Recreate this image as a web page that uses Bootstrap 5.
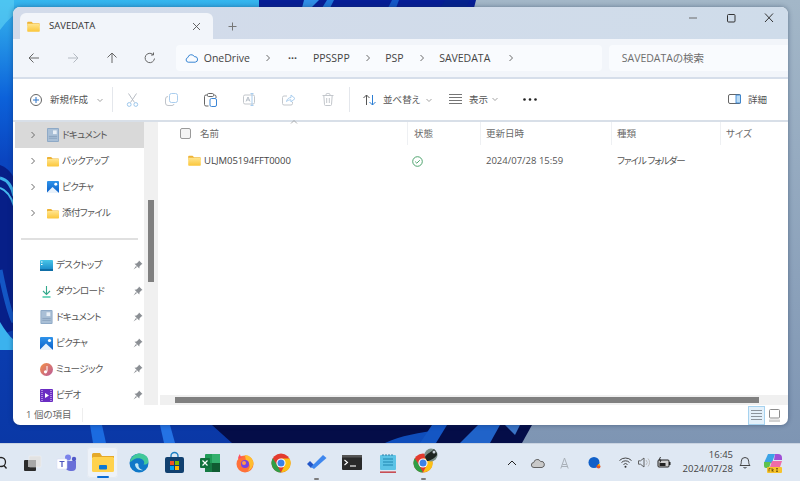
<!DOCTYPE html>
<html lang="ja">
<head>
<meta charset="UTF-8">
<title>SAVEDATA - エクスプローラー</title>
<link href="https://cdn.jsdelivr.net/npm/bootstrap@5.3.0/dist/css/bootstrap.min.css" rel="stylesheet">
<style>
html, body { height: 481px; overflow: hidden; }
body { font-family: "Open Sans", "Noto Sans CJK JP", sans-serif; font-size: 9.5px; color: #555; background: #8fa6bd; line-height: 1.2; font-feature-settings: "palt"; white-space: nowrap; }
svg { display: block; flex: none; overflow: visible; }
.desk { height: 443px; }
.wall { position: absolute; left: 0; top: 0; }
.win { position: absolute; left: 13px; top: 7px; width: 775px; height: 418px; background: #fff; border-radius: 7px; overflow: hidden; box-shadow: 0 0 5px rgba(20, 40, 70, .45); }

.tabstrip { height: 32px; background: linear-gradient(90deg, #d3dbea, #cfdcea); }
.ftab { width: 193px; height: 26px; margin-left: 7px; background: #f2f5fa; border-radius: 6px 6px 0 0; padding: 0 12px 0 7px; color: #333; }
.ftab-title { margin-left: 9px; }
.plus { margin-left: 15px; margin-top: 6px; }
.winbtns { gap: 26px; padding-right: 13px; margin-bottom: 16px; }

.addr { height: 40px; background: #f2f5fa; border-bottom: 2px solid #d6deea; }
.navbtn { width: 38.7px; }
.navbtns { padding-left: 2px; }
.crumbs { width: 426px; height: 26px; margin-left: 6px; background: #f9fbfe; border-radius: 4px; padding-left: 9px; font-size: 10.5px; color: #444; }
.crumbs .c-chev { margin-left: 14px; }
.crumbs span.c-drive { margin-left: 6px; }
.crumbs span.c-dots { margin-left: 16px; font-weight: 700; }
.crumbs span.c-name { margin-left: 13.5px; }
.crumbs span.c-first { margin-left: 16px; }
.crumbs .c-last { margin-left: 17px; }
.searchbox { width: 179px; height: 26px; margin-left: 7px; background: #f9fbfe; border-radius: 4px 0 0 4px; padding-left: 13px; font-size: 10.5px; color: #6d6d6d; }

.cmdbar { height: 43px; border-bottom: 2px solid #d8dfe8; padding-left: 17px; }
.newbtn { width: 82px; gap: 8px; }
.vsep { width: 1px; height: 25px; background: #e4e7ec; }
.vsep-b { margin-left: 2px; }
.toolbtn { width: 39px; }
.sortbtn { width: 82px; padding-left: 13px; gap: 7px; }
.sortbtn svg:last-child { margin-left: -2px; }
.viewbtn { width: 72px; gap: 7px; padding-left: 9px; margin-left: 8px; }
.viewbtn svg:last-child { margin-left: -4px; }
.dotsbtn { width: 22px; margin-left: 7px; }
.detailbtn { gap: 7px; padding-right: 21px; }

.pane { height: 283px; }
.navpane { width: 145px; }
.navlist { width: 131px; padding-left: 2px; }
.navrow { height: 26px; flex: none; color: #555; letter-spacing: -.6px; }
.navrow.cur { background: #d9d9d9; }
.exp { padding-left: 14px; gap: 10px; }
.pinrow { padding-left: 25px; gap: 3px; }
.exp .navname { margin-left: -7px; }
.pinicon { margin-left: auto; margin-right: 1px; }
.navdiv { height: 2px; margin: 12px 6px 12px 6px; background: #e0e0e0; flex: none; }
.vscroll { width: 14px; background: #f0f0f0; padding: 78px 4px 0 4px; }
.vthumb { height: 82px; background: #808080; }
.mainpane { min-width: 0; margin-left: 2px; }
.colhead { height: 24px; color: #6a6a6a; }
.caret-up { position: absolute; left: 130px; top: -2px; }
.col-name { width: 248px; padding-left: 20px; }
.col-state { width: 73px; padding-left: 6px; }
.col-date { width: 131px; padding-left: 5px; }
.col-kind { width: 109px; padding-left: 5px; }
.col-size { padding-left: 5px; }
.colhead > div { height: 23px; border-right: 1px solid #eef0f3; }
.colhead > .col-size { border-right: 0; }
.headcheck { width: 11px; height: 11px; border: 1px solid #9a9a9a; border-radius: 2px; background: #f4f4f4; margin-right: 9px; }
.filerow { height: 28px; margin-top: 1px; }
.filerow .col-name { padding-left: 28px; gap: 3px; color: #444; }
.filerow .col-state { padding-left: 4px; }
.filerow .col-kind { letter-spacing: -1px; }
.hscroll { height: 10px; background: #f0f0f0; padding: 2px 29px 1px 15px; }
.hthumb { height: 6px; background: #808080; }

.statusbar { height: 20px; padding-left: 13px; color: #666; }
.statusitem { padding-right: 10px; border-right: 1px solid #eee; height: 14px; }
.viewtoggle { padding-right: 8px; gap: 4px; }
.listtoggle { width: 17px; height: 19px; background: #e3f0fa; border: 1px solid #a6d2ef; }

.taskbar { height: 38px; background: #dfe8f3; border-top: 1px solid #c9d3e1; }
.tb-search { width: 14px; height: 36px; overflow: hidden; }
.tb-item { width: 35.6px; height: 36px; position: relative; }
.tb-item.on { background: #edf2f9; border-radius: 4px; box-shadow: inset 0 0 0 1px #e3e9f2; width: 31px; height: 31px; margin: 0 2.3px; }
.tb-dot { position: absolute; left: 50%; bottom: 1px; width: 5px; height: 2px; margin-left: -2.5px; background: #7c7c7c; border-radius: 1px; }
.tb-item.on .tb-dot { width: 12px; margin-left: -6px; background: #0a6cd4; bottom: 0; }
.overlay { position: absolute; left: 18px; top: 3px; }
.tray { color: #333; }
.tray-ico { width: 26px; }
.tray-w { width: 27px; }
.tray-n { width: 19px; }
.clock { width: 56px; text-align: right; font-size: 9.5px; line-height: 14px; color: #444; margin-left: 4px; margin-bottom: 2px; }
.bellbox { width: 24px; }
.copilot { width: 43px; padding-right: 17px; }
</style>
</head>
<body>
<svg width="0" height="0" class="position-absolute">
  <defs>
    <linearGradient id="gFold" x1="0" y1="0" x2="0" y2="1"><stop offset="0" stop-color="#ffe58f"/><stop offset="1" stop-color="#fbc63a"/></linearGradient>
    <linearGradient id="gPic" x1="0" y1="0" x2="0" y2="1"><stop offset="0" stop-color="#2f93ea"/><stop offset="1" stop-color="#0b5fc8"/></linearGradient>
    <linearGradient id="gDesk" x1="0" y1="0" x2="0" y2="1"><stop offset="0" stop-color="#49c6e8"/><stop offset="1" stop-color="#1a8ac9"/></linearGradient>
    <linearGradient id="gMusic" x1="0" y1="0" x2="1" y2="1"><stop offset="0" stop-color="#f59044"/><stop offset="1" stop-color="#b95a9c"/></linearGradient>
    <linearGradient id="gWallL" x1="0" y1="0" x2="0" y2="1"><stop offset="0" stop-color="#35b6ee"/><stop offset=".22" stop-color="#0c62da"/><stop offset=".36" stop-color="#0a45c0"/><stop offset="1" stop-color="#0a38a6"/></linearGradient>
    <linearGradient id="gWallR" x1="0" y1="0" x2="0" y2="1"><stop offset="0" stop-color="#a3b7c8"/><stop offset="1" stop-color="#7e95b3"/></linearGradient>
    <symbol id="folder" viewBox="0 0 16 14"><path d="M0 2a1 1 0 0 1 1-1h4.500l2 2H15a1 1 0 0 1 1 1v2H0z" fill="#eeb336"/><rect y="3.600" width="16" height="10" rx="1" fill="url(#gFold)"/></symbol>
    <symbol id="chev" viewBox="0 0 8 8"><path d="M2.500 1l3 3-3 3" fill="none" stroke="#6b6b6b" stroke-width="1"/></symbol>
    <symbol id="down" viewBox="0 0 8 8"><path d="M1.500 3l2.500 2.500L6.500 3" fill="none" stroke="#8a8a8a" stroke-width=".8"/></symbol>
    <symbol id="pin" viewBox="0 0 10 10"><path d="M6 .5L9.500 4 8.300 4.500 6.500 6.500 6.300 8.500 1.500 3.700 3.500 3.500 5.500 1.700zM3 6L.5 9.500 4 7z" fill="#8b8f94"/></symbol>
    <symbol id="docu" viewBox="0 0 13 15"><rect width="13" height="15" rx="1" fill="#8ea9c6"/><rect x="1" y="1" width="11" height="13" fill="#a9bfd6"/><rect x="6.500" y="2.500" width="4" height="4" fill="#e8eff6"/><path d="M2 9h9M2 11h9" stroke="#7f99b6" stroke-width=".8"/></symbol>
    <symbol id="pict" viewBox="0 0 13 13"><rect width="13" height="13" rx="1" fill="url(#gPic)"/><circle cx="9.500" cy="3.500" r="1.600" fill="#fff"/><path d="M0 12.500 6 6.500l6.500 6V13H0z" fill="#e9f2fb"/></symbol>
  </defs>
</svg>

<div class="desk position-relative">
  <svg class="wall" width="800" height="443" viewBox="0 0 800 443">
    <rect width="800" height="443" fill="url(#gWallR)"/>
    <rect width="259" height="443" fill="url(#gWallL)"/>
    <polygon points="259,0 476,0 474,8 259,8" fill="#071e96"/>
    <polygon points="304,0 319,0 311,8 302,8" fill="#2f8ee6"/>
    <polygon points="327,0 334,0 330,8 322,8" fill="#1e75d8"/>
    <polygon points="392,0 399,0 396,8 388,8" fill="#1458c8"/>
    <polygon points="445,0 470,0 466,8 440,8" fill="#06238f"/>
    <path d="M0 30C6 22 10 18 14 15V0H0z" fill="#58ccf2" opacity=".7"/>
    <path d="M0 165C8 168 13 174 14 180L14 330 0 335z" fill="#071f88"/>
    <path d="M0 178C8 180 12 186 14 196" fill="none" stroke="#3db0ec" stroke-width="3"/>
    <path d="M0 188C6 190 11 196 14 206" fill="none" stroke="#46b9f0" stroke-width="2"/>
    <path d="M0 270C4 290 8 310 14 322" fill="none" stroke="#1356c4" stroke-width="5"/>
    <path d="M0 322C5 330 9 336 14 340V350H0z" fill="#3bb2ee"/>
    <polygon points="90,425 102,425 106,443 93,443" fill="#1b6be0"/>
    <polygon points="160,425 170,425 175,443 164,443" fill="#2472e4"/>
    <polygon points="212,425 532,425 522,443 232,443" fill="#040d48"/>
    <path d="M385 443C400 436 420 432 440 430L430 443z" fill="#0f4dbb"/>
    <polygon points="432,425 447,425 436,443 420,443" fill="#1456c4"/>
    <polygon points="460,443 478,425 500,425 490,443" fill="#2063c9"/>
    <polygon points="505,425 520,425 515,435" fill="#3a74c6"/>
  </svg>

  <div class="win d-flex flex-column">
    <div class="tabstrip d-flex align-items-end">
      <div class="ftab d-flex align-items-center">
        <svg width="13" height="11"><use href="#folder"/></svg>
        <span class="ftab-title flex-grow-1">SAVEDATA</span>
        <svg width="9" height="9" viewBox="0 0 9 9"><path d="M1 1l7 7M8 1L1 8" stroke="#555" stroke-width=".9"/></svg>
      </div>
      <svg class="plus mb-2" width="9" height="9" viewBox="0 0 9 9"><path d="M4.500.5v8M.5 4.500h8" stroke="#777" stroke-width="1"/></svg>
      <div class="winbtns d-flex align-items-center ms-auto">
        <svg width="12" height="10" viewBox="0 0 12 10"><path d="M2 5h8" stroke="#6a6a6a" stroke-width="1"/></svg>
        <svg width="12" height="10" viewBox="0 0 12 10"><rect x="2.500" y="1.500" width="7.500" height="7.500" rx="1" fill="none" stroke="#333" stroke-width="1"/></svg>
        <svg width="12" height="10" viewBox="0 0 12 10"><path d="M2 .5l8 8.500M10 .5L2 9" stroke="#333" stroke-width="1"/></svg>
      </div>
    </div>

    <div class="addr d-flex align-items-center">
      <div class="navbtns d-flex">
        <div class="navbtn d-flex justify-content-center"><svg width="12" height="12" viewBox="0 0 12 12"><path d="M11 6H1M5.500 1.500L1 6l4.500 4.500" fill="none" stroke="#666" stroke-width="1"/></svg></div>
        <div class="navbtn d-flex justify-content-center"><svg width="12" height="12" viewBox="0 0 12 12"><path d="M1 6h10M6.500 1.500L11 6l-4.500 4.500" fill="none" stroke="#b4bac2" stroke-width="1"/></svg></div>
        <div class="navbtn d-flex justify-content-center"><svg width="12" height="12" viewBox="0 0 12 12"><path d="M6 11V1M1.500 5.500L6 1l4.500 4.500" fill="none" stroke="#666" stroke-width="1"/></svg></div>
        <div class="navbtn d-flex justify-content-center"><svg width="12" height="12" viewBox="0 0 12 12"><path d="M10.500 6.500A4.700 4.700 0 1 1 9 2.500M9.500 .5v2.500H7" fill="none" stroke="#666" stroke-width="1"/></svg></div>
      </div>
      <div class="crumbs d-flex align-items-center">
        <svg width="13" height="10" viewBox="0 0 13 10"><path d="M3.200 9.200a2.400 2.400 0 0 1-.3-4.700 3.400 3.400 0 0 1 6.400-.9 2.800 2.800 0 0 1 .9 5.600z" fill="none" stroke="#3a87d4" stroke-width="1"/></svg>
        <span class="c-drive">OneDrive</span>
        <svg class="c-chev" width="8" height="8"><use href="#chev"/></svg>
        <span class="c-dots">···</span>
        <span class="c-name c-first">PPSSPP</span>
        <svg class="c-chev" width="8" height="8"><use href="#chev"/></svg>
        <span class="c-name">PSP</span>
        <svg class="c-chev" width="8" height="8"><use href="#chev"/></svg>
        <span class="c-name">SAVEDATA</span>
        <svg class="c-chev c-last" width="8" height="8"><use href="#chev"/></svg>
      </div>
      <div class="searchbox d-flex align-items-center">SAVEDATAの検索</div>
    </div>

    <div class="cmdbar d-flex align-items-center">
      <div class="newbtn d-flex align-items-center">
        <svg width="12" height="12" viewBox="0 0 12 12"><circle cx="6" cy="6" r="5.500" fill="none" stroke="#555" stroke-width=".9"/><path d="M6 3v6M3 6h6" stroke="#2c74c9" stroke-width="1"/></svg>
        <span>新規作成</span>
        <svg width="8" height="8"><use href="#down"/></svg>
      </div>
      <div class="vsep"></div>
      <div class="toolbtn d-flex justify-content-center"><svg width="13" height="14" viewBox="0 0 13 14"><path d="M2.500.5l6 9M10.500.5l-6 9" stroke="#b0b6bd" stroke-width=".9"/><circle cx="3.200" cy="11.500" r="1.900" fill="none" stroke="#9cc7ec" stroke-width="1"/><circle cx="9.800" cy="11.500" r="1.900" fill="none" stroke="#9cc7ec" stroke-width="1"/></svg></div>
      <div class="toolbtn d-flex justify-content-center"><svg width="13" height="13" viewBox="0 0 13 13"><rect x="4.500" y=".5" width="8" height="9" rx="2" fill="none" stroke="#a9cdee" stroke-width="1"/><path d="M3 3.500A2.500 2.500 0 0 0 .5 6v4A2.500 2.500 0 0 0 3 12.500h4a2 2 0 0 0 2-1.500" fill="none" stroke="#c0c4ca" stroke-width="1"/></svg></div>
      <div class="toolbtn d-flex justify-content-center"><svg width="13" height="14" viewBox="0 0 13 14"><path d="M3.500 2H2A1.500 1.500 0 0 0 .5 3.500v8A1.500 1.500 0 0 0 2 13h2.500M9.500 2h1A1.500 1.500 0 0 1 12 3.500V5" fill="none" stroke="#666" stroke-width="1"/><rect x="3.500" y=".5" width="6" height="3" rx="1" fill="#fff" stroke="#666" stroke-width="1"/><rect x="6" y="5.500" width="6.500" height="8" rx="1.500" fill="#fff" stroke="#3b86d6" stroke-width="1"/></svg></div>
      <div class="toolbtn d-flex justify-content-center"><svg width="14" height="13" viewBox="0 0 14 13"><rect x=".5" y="2" width="11" height="9" rx="1.500" fill="none" stroke="#c3c7cc" stroke-width="1"/><path d="M3 8.500L5 4l2 4.500M3.700 7h2.600" fill="none" stroke="#a7b1bc" stroke-width=".8"/><path d="M9 .5v12M7.500.5h3M7.500 12.500h3" fill="none" stroke="#a9cdee" stroke-width="1"/></svg></div>
      <div class="toolbtn d-flex justify-content-center"><svg width="14" height="13" viewBox="0 0 14 13"><path d="M5 3H2A1.500 1.500 0 0 0 .5 4.500v6A1.500 1.500 0 0 0 2 12h7a1.500 1.500 0 0 0 1.500-1.500V9" fill="none" stroke="#c3c7cc" stroke-width="1"/><path d="M4.500 8.500C5 6 7 4.500 9 4.500V2l4 3.500-4 3.500V6.800C7.500 6.800 5.800 7.300 4.500 8.500z" fill="none" stroke="#a9cdee" stroke-width="1"/></svg></div>
      <div class="toolbtn d-flex justify-content-center"><svg width="12" height="13" viewBox="0 0 12 13"><path d="M.5 2.500h11M4 2.500V1.700A1.200 1.200 0 0 1 5.200.5h1.600A1.200 1.200 0 0 1 8 1.700v.8M1.800 2.500l.7 9a1 1 0 0 0 1 1h5a1 1 0 0 0 1-1l.7-9M4.700 5v5M7.300 5v5" fill="none" stroke="#c3c7cc" stroke-width="1"/></svg></div>
      <div class="vsep vsep-b"></div>
      <div class="sortbtn d-flex align-items-center">
        <svg width="13" height="12" viewBox="0 0 13 12"><path d="M3.500 11V1M.5 4l3-3 3 3" fill="none" stroke="#555" stroke-width="1"/><path d="M9.500 1v10M6.500 8l3 3 3-3" fill="none" stroke="#2c7ed3" stroke-width="1"/></svg>
        <span>並べ替え</span>
        <svg width="8" height="8"><use href="#down"/></svg>
      </div>
      <div class="viewbtn d-flex align-items-center">
        <svg width="13" height="10" viewBox="0 0 13 10"><path d="M0 .5h13M0 3.500h13M0 6.500h13M0 9.500h13" stroke="#666" stroke-width=".9"/></svg>
        <span>表示</span>
        <svg width="8" height="8"><use href="#down"/></svg>
      </div>
      <div class="dotsbtn d-flex justify-content-center"><svg width="14" height="3" viewBox="0 0 14 3"><circle cx="1.500" cy="1.500" r="1.300" fill="#222"/><circle cx="7" cy="1.500" r="1.300" fill="#222"/><circle cx="12.500" cy="1.500" r="1.300" fill="#222"/></svg></div>
      <div class="detailbtn d-flex align-items-center ms-auto">
        <svg width="13" height="10" viewBox="0 0 13 10"><rect x=".5" y=".5" width="12" height="9" rx="1.500" fill="none" stroke="#666" stroke-width="1"/><rect x="8" y="1" width="4.500" height="8" fill="#bcdcf5" stroke="#2c7ed3" stroke-width=".8"/></svg>
        <span>詳細</span>
      </div>
    </div>

    <div class="pane d-flex">
      <div class="navpane d-flex">
        <div class="navlist d-flex flex-column overflow-hidden">
          <div class="navrow cur exp d-flex align-items-center"><svg width="8" height="8"><use href="#chev"/></svg><svg width="12" height="14"><use href="#docu"/></svg><span class="navname">ドキュメント</span></div>
          <div class="navrow exp d-flex align-items-center"><svg width="8" height="8"><use href="#chev"/></svg><svg width="12" height="11"><use href="#folder"/></svg><span class="navname">バックアップ</span></div>
          <div class="navrow exp d-flex align-items-center"><svg width="8" height="8"><use href="#chev"/></svg><svg width="12" height="12"><use href="#pict"/></svg><span class="navname">ピクチャ</span></div>
          <div class="navrow exp d-flex align-items-center"><svg width="8" height="8"><use href="#chev"/></svg><svg width="12" height="11"><use href="#folder"/></svg><span class="navname">添付ファイル</span></div>
          <div class="navdiv"></div>
          <div class="navrow pinrow d-flex align-items-center"><svg width="13" height="11" viewBox="0 0 13 11"><rect width="13" height="10" rx="1" fill="url(#gDesk)"/><rect y="9" width="13" height="2" fill="#0f6ea6"/><path d="M1 2h1.500M1 4.500h1.500" stroke="#fff" stroke-width="1"/></svg><span>デスクトップ</span><svg class="pinicon" width="10" height="10"><use href="#pin"/></svg></div>
          <div class="navrow pinrow d-flex align-items-center"><svg width="13" height="13" viewBox="0 0 13 13"><path d="M6.500 1v8M3 6l3.500 3.500L10 6" fill="none" stroke="#35a98c" stroke-width="1.100"/><path d="M2.500 12h8" stroke="#2cc09a" stroke-width="1.300"/></svg><span>ダウンロード</span><svg class="pinicon" width="10" height="10"><use href="#pin"/></svg></div>
          <div class="navrow pinrow d-flex align-items-center"><svg width="13" height="14"><use href="#docu"/></svg><span>ドキュメント</span><svg class="pinicon" width="10" height="10"><use href="#pin"/></svg></div>
          <div class="navrow pinrow d-flex align-items-center"><svg width="13" height="13"><use href="#pict"/></svg><span>ピクチャ</span><svg class="pinicon" width="10" height="10"><use href="#pin"/></svg></div>
          <div class="navrow pinrow d-flex align-items-center"><svg width="13" height="13" viewBox="0 0 13 13"><circle cx="6.500" cy="6.500" r="6.500" fill="url(#gMusic)"/><path d="M7 3v5.500" stroke="#fff" stroke-width="1"/><circle cx="5.500" cy="8.800" r="1.600" fill="#fff"/></svg><span>ミュージック</span><svg class="pinicon" width="10" height="10"><use href="#pin"/></svg></div>
          <div class="navrow pinrow d-flex align-items-center"><svg width="13" height="13" viewBox="0 0 13 13"><rect width="13" height="13" rx="1" fill="#6a2cc2"/><path d="M2 1v11M11 1v11" stroke="#d6c1f2" stroke-width="1.200" stroke-dasharray="1 1"/><path d="M5 4l4 2.500L5 9z" fill="#fff"/></svg><span>ビデオ</span><svg class="pinicon" width="10" height="10"><use href="#pin"/></svg></div>
        </div>
        <div class="vscroll"><div class="vthumb"></div></div>
      </div>

      <div class="mainpane flex-grow-1 d-flex flex-column">
        <div class="colhead d-flex position-relative">
          <div class="col-name d-flex align-items-center"><div class="headcheck"></div><span>名前</span></div>
          <svg class="caret-up" width="8" height="4" viewBox="0 0 8 4"><path d="M1 3.500l3-3 3 3" fill="none" stroke="#999" stroke-width=".8"/></svg>
          <div class="col-state d-flex align-items-center">状態</div>
          <div class="col-date d-flex align-items-center">更新日時</div>
          <div class="col-kind d-flex align-items-center">種類</div>
          <div class="col-size d-flex align-items-center">サイズ</div>
        </div>
        <div class="filerow d-flex align-items-center">
          <div class="col-name d-flex align-items-center"><svg width="13" height="11"><use href="#folder"/></svg><span>ULJM05194FFT0000</span></div>
          <div class="col-state d-flex align-items-center"><svg width="11" height="11" viewBox="0 0 11 11"><circle cx="5.500" cy="5.500" r="4.800" fill="none" stroke="#3c9a5f" stroke-width=".9"/><path d="M3.200 5.600l1.600 1.600 3-3" fill="none" stroke="#3c9a5f" stroke-width=".9"/></svg></div>
          <div class="col-date">2024/07/28 15:59</div>
          <div class="col-kind">ファイル フォルダー</div>
        </div>
        <div class="flex-grow-1"></div>
        <div class="hscroll"><div class="hthumb"></div></div>
      </div>
    </div>

    <div class="statusbar d-flex align-items-center">
      <div class="statusitem d-flex align-items-center">1 個の項目</div>
      <div class="viewtoggle d-flex align-items-center ms-auto">
        <div class="listtoggle d-flex align-items-center justify-content-center"><svg width="11" height="10" viewBox="0 0 11 10"><path d="M0 .5h11M0 3.500h11M0 6.500h11M0 9.500h11" stroke="#8b949c" stroke-width="1"/></svg></div>
        <svg width="11" height="13" viewBox="0 0 11 13"><rect x=".5" y=".5" width="10" height="8.500" rx="1" fill="#fff" stroke="#8b8b8b" stroke-width="1"/><rect y="10.500" width="11" height="2.500" fill="#d2d2d2"/></svg>
      </div>
    </div>
  </div>
</div>

<div class="taskbar d-flex align-items-center">
  <div class="tb-search d-flex align-items-center justify-content-end"><svg width="14" height="14" viewBox="0 0 14 14"><circle cx="1" cy="6" r="4.500" fill="none" stroke="#222" stroke-width="1.300"/><path d="M4 9.500l2.500 3" stroke="#222" stroke-width="1.300"/></svg></div>
  <div class="tb-item d-flex align-items-center justify-content-center"><svg width="20" height="18" viewBox="0 0 20 18"><rect x="2" y="6" width="12" height="11" rx="1" fill="#2b2b2b"/><rect x="7" y="2" width="12" height="11" rx="1" fill="#e2e2e2" stroke="#f2f2f2" stroke-width=".5"/><rect x="6" y="6" width="8" height="7" fill="#a8a8a8"/></svg></div>
  <div class="tb-item d-flex align-items-center justify-content-center"><svg width="20" height="18" viewBox="0 0 20 18"><circle cx="11" cy="3.500" r="3" fill="#7b83eb"/><circle cx="17" cy="5" r="2.200" fill="#5059c9"/><path d="M8 7h11v6a4 4 0 0 1-4 4h-2a5 5 0 0 1-5-5z" fill="#6a70d8"/><rect y="5" width="10" height="10" rx="1" fill="#fff" stroke="#d6d8f4" stroke-width=".5"/><path d="M2.500 7.500h5M5 7.500v5.500" stroke="#4b53bc" stroke-width="1.200"/></svg></div>
  <div class="tb-item on d-flex align-items-center justify-content-center"><svg width="22" height="19" viewBox="0 0 22 19"><path d="M0 1.500A1.500 1.500 0 0 1 1.500 0H8l2 3h12v2H0z" fill="#e5a92a"/><rect y="4" width="22" height="15" rx="1.500" fill="#ffd24d"/><rect x="7" y="12" width="8" height="4.500" rx="1" fill="#0c78d4"/></svg><div class="tb-dot"></div></div>
  <div class="tb-item d-flex align-items-center justify-content-center"><svg width="20" height="20" viewBox="0 0 20 20"><circle cx="10" cy="10" r="9.500" fill="#0f78c8"/><path d="M1 9C2 3 7 .5 11 .5c5 0 8.500 4 8.500 7.500 0 3-3 4-5 3.500 1-1 1.200-3-.5-4.500C12 5 7 4.500 4 7c-1.500 1.200-2.500 2-3 2z" fill="#42c89a"/><path d="M6 11c0 4 4 7 8 6-3-.5-5-3-4.500-5.500C9 10 7 10 6 11z" fill="#bfe7f5"/></svg></div>
  <div class="tb-item d-flex align-items-center justify-content-center"><svg width="19" height="20" viewBox="0 0 19 20"><path d="M6 5V3a3.500 3.500 0 0 1 7 0v2" fill="none" stroke="#1d7fc4" stroke-width="1.400"/><rect y="4" width="19" height="16" rx="2" fill="#11406f"/><rect x="5" y="8" width="4" height="4" fill="#f25022"/><rect x="10" y="8" width="4" height="4" fill="#7fba00"/><rect x="5" y="13" width="4" height="4" fill="#00a4ef"/><rect x="10" y="13" width="4" height="4" fill="#ffb900"/></svg></div>
  <div class="tb-item d-flex align-items-center justify-content-center"><svg width="20" height="18" viewBox="0 0 20 18"><rect x="5" y="0" width="15" height="18" rx="1" fill="#1f9c58"/><rect x="12" y="0" width="8" height="9" fill="#33b06e"/><rect x="5" y="9" width="7" height="9" fill="#157a43"/><rect x="12" y="9" width="8" height="9" fill="#0f5c32"/><rect y="4" width="10" height="10" rx="1" fill="#10713c"/><path d="M2.500 6.500l5 5M7.500 6.500l-5 5" stroke="#fff" stroke-width="1.200"/></svg></div>
  <div class="tb-item d-flex align-items-center justify-content-center"><svg width="20" height="20" viewBox="0 0 20 20"><circle cx="10" cy="11" r="8.500" fill="#ff7139"/><path d="M10 2c4 0 8 3 8.500 8-.5 4-3 7-6 8 3-3 3-7 0-9-1-1-2-2-2.500-7z" fill="#ffbd2e"/><circle cx="10" cy="11" r="4" fill="#7542e5"/><circle cx="9" cy="10" r="2" fill="#ff9a4a"/><path d="M3 6c0-2 1-4 2-5 0 2 1 3 3 3z" fill="#ff4f5e"/></svg></div>
  <div class="tb-item d-flex align-items-center justify-content-center"><svg width="20" height="20" viewBox="0 0 20 20"><circle cx="10" cy="10" r="9.500" fill="#e33b2e"/><path d="M10 5.500h8.600A9.500 9.500 0 0 1 10 19.500l4-8z" fill="#fbc116"/><path d="M1.800 5.200 6 12l4 7.500A9.500 9.500 0 0 1 1.800 5.200z" fill="#2f9e44"/><circle cx="10" cy="10" r="4.600" fill="#fff"/><circle cx="10" cy="10" r="3.500" fill="#3b82e8"/></svg></div>
  <div class="tb-item d-flex align-items-center justify-content-center"><svg width="20" height="15" viewBox="0 0 20 15"><path d="M0 9l3-3 4 4-3 3z" fill="#2256c8"/><path d="M4 13L16 1l3.500 3L7 15z" fill="#3f87ee" transform="translate(0 -1)"/></svg><div class="tb-dot"></div></div>
  <div class="tb-item d-flex align-items-center justify-content-center"><svg width="20" height="15" viewBox="0 0 20 15"><rect width="20" height="15" rx="1" fill="#2a2a2a"/><rect width="20" height="2.500" fill="#555"/><path d="M2.500 5l3 2.500-3 2.500" fill="none" stroke="#fff" stroke-width="1.100"/><path d="M8 11h6" stroke="#fff" stroke-width="1.100"/></svg></div>
  <div class="tb-item d-flex align-items-center justify-content-center"><svg width="16" height="20" viewBox="0 0 16 20"><rect y="2" width="16" height="15" rx="1" fill="#5cc3e6"/><path d="M3 1v2M6 1v2M9 1v2M12 1v2" stroke="#2d7fa6" stroke-width="1"/><path d="M3 6h10M3 9h10M3 12h10" stroke="#1f86b0" stroke-width="1"/><rect y="18.500" width="16" height="1.300" fill="#c2282f"/></svg></div>
  <div class="tb-item d-flex align-items-center justify-content-center"><svg width="20" height="20" viewBox="0 0 20 20"><circle cx="10" cy="10" r="9.500" fill="#e33b2e"/><path d="M10 5.500h8.600A9.500 9.500 0 0 1 10 19.500l4-8z" fill="#fbc116"/><path d="M1.800 5.200 6 12l4 7.500A9.500 9.500 0 0 1 1.800 5.200z" fill="#2f9e44"/><circle cx="10" cy="10" r="4.600" fill="#fff"/><circle cx="10" cy="10" r="3.500" fill="#3b82e8"/></svg><svg class="overlay" width="14" height="14" viewBox="0 0 14 14"><circle cx="7" cy="7" r="6.500" fill="#7b8f88"/><path d="M1 9C3 5 8 4 10 1c2 2 3 4 3 6-3 4-8 6-10 6z" fill="#1d2520"/><circle cx="10" cy="4" r="1.500" fill="#c9d2d8"/></svg><div class="tb-dot"></div></div>

  <div class="tray d-flex align-items-center ms-auto">
    <div class="tray-ico d-flex justify-content-center"><svg width="10" height="6" viewBox="0 0 10 6"><path d="M1 5l4-4 4 4" fill="none" stroke="#222" stroke-width="1"/></svg></div>
    <div class="tray-ico d-flex justify-content-center"><svg width="14" height="10" viewBox="0 0 14 10"><path d="M3 9.500a2.500 2.500 0 0 1-.2-5 3.600 3.600 0 0 1 6.800-1A3 3 0 0 1 11 9.500z" fill="#c9c9c9" stroke="#555" stroke-width=".9"/></svg></div>
    <div class="tray-ico d-flex justify-content-center"><svg width="9" height="12" viewBox="0 0 9 12"><path d="M.8 11.500L4.500 1l3.700 10.500M2.300 7.500h4.400M1.500 9.500h6" fill="none" stroke="#a9b0b8" stroke-width="1"/></svg></div>
    <div class="tray-w d-flex justify-content-center ms-1 me-2"><svg width="13" height="13" viewBox="0 0 13 13"><circle cx="6" cy="6.500" r="5.500" fill="#1160c8"/><circle cx="10.500" cy="10.500" r="2" fill="#e2572a"/><circle cx="11" cy="9" r="1" fill="#f4b400"/></svg></div>
    <div class="tray-n d-flex justify-content-center"><svg width="13" height="11" viewBox="0 0 13 11"><path d="M.5 3.500a8.500 8.500 0 0 1 12 0M2.500 5.500a5.600 5.600 0 0 1 8 0M4.500 7.500a2.800 2.800 0 0 1 4 0" fill="none" stroke="#333" stroke-width=".9"/><circle cx="6.500" cy="9.800" r="1" fill="#333"/></svg></div>
    <div class="tray-n d-flex justify-content-center"><svg width="13" height="11" viewBox="0 0 13 11"><path d="M.5 3.800h2L6 1v9L2.500 7.200h-2z" fill="none" stroke="#555" stroke-width=".9"/><path d="M8 3a3.500 3.500 0 0 1 0 5M10 1.500a6 6 0 0 1 0 8" fill="none" stroke="#b5b5b5" stroke-width=".9"/></svg></div>
    <div class="tray-n d-flex justify-content-center"><svg width="14" height="11" viewBox="0 0 14 11"><rect x="1" y="3" width="11" height="7" rx="1" fill="#cfcfcf" stroke="#222" stroke-width="1"/><rect x="2.500" y="6" width="6" height="3" fill="#222"/><path d="M12 5h1.500v3H12" fill="#222"/><path d="M3.500 0L2 3h2L3 5.500" fill="none" stroke="#222" stroke-width=".9"/></svg></div>
    <div class="clock"><div>16:45</div><div>2024/07/28</div></div>
    <div class="bellbox d-flex justify-content-center"><svg width="12" height="13" viewBox="0 0 12 13"><path d="M1 9.500c1-1 1.300-2 1.300-4.300a3.700 3.700 0 0 1 7.400 0C9.700 7.500 10 8.500 11 9.500zM4.500 11a1.600 1.600 0 0 0 3 0" fill="none" stroke="#333" stroke-width=".9"/></svg></div>
    <div class="copilot d-flex justify-content-end"><svg width="20" height="20" viewBox="0 0 20 20"><path d="M5 1h7L9 10H1z" fill="#3ba3e6"/><path d="M12 1h3a4 4 0 0 1 4 4v2h-8z" fill="#a04fd6"/><path d="M1 9h7l-2 6H3a2 2 0 0 1-2-2z" fill="#5ec24f"/><path d="M9 8h10l-2 6H7z" fill="#ee6ca8"/><rect x="4" y="14" width="15" height="6" rx="1" fill="#f7c32b"/><path d="M6 18.500v-3h1.500M9 18.500v-3l1.500 1.500-1.500 .5 1.500 1M13 15.500h2M13 17h2M13 18.500h2" fill="none" stroke="#574004" stroke-width=".7"/></svg></div>
  </div>
</div>
<script src="https://cdn.jsdelivr.net/npm/bootstrap@5.3.0/dist/js/bootstrap.bundle.min.js"></script>
</body>
</html>
